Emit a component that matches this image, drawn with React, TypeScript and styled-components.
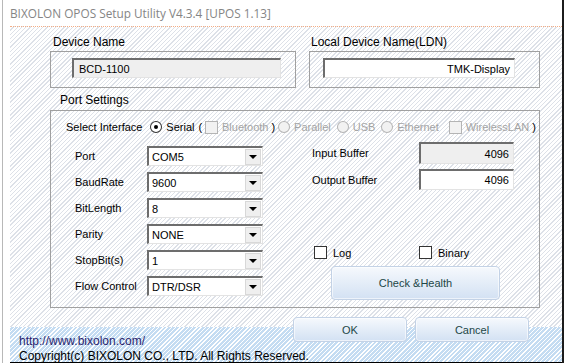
import React from "react";
import { styled, createGlobalStyle } from "styled-components";

const GlobalStyle = createGlobalStyle`
  html, body {
    margin: 0;
    padding: 0;
    background: #ffffff;
    overflow: hidden;
  }
`;

const grayHatch = "repeating-linear-gradient(135deg, #ffffff 0 2px, #dde1e8 2px 3px)";
const blueHatch = "repeating-linear-gradient(135deg, #ffffff 0 1px, #c4dcf2 1px 3px)";

const Frame = styled.div`
  box-sizing: border-box;
  width: 562px;
  height: 363px;
  margin-left: 2px;
  border-left: 1px solid #b8b8b8;
  border-right: 2px solid #1c1c1c;
  background: #ffffff;
  display: flex;
  flex-direction: column;
  font-family: "Liberation Sans", Arial, sans-serif;
  color: #000;
`;

const TitleBar = styled.div`
  height: 26px;
  padding-left: 7px;
  display: flex;
  align-items: center;
  font-family: "Open Sans", "Noto Sans", sans-serif;
  font-size: 11.8px;
  color: #858585;
  white-space: nowrap;
`;

const Content = styled.div`
  flex: 1;
  margin-left: 7px;
  border-top: 1px dotted #f4ad85;
  border-bottom: 1px solid #000;
  background: ${grayHatch};
  display: flex;
  flex-direction: column;
  padding-top: 8px;
  min-height: 0;
`;

const Main = styled.div`
  padding-left: 40px;
  display: flex;
  flex-direction: column;
`;

const TopRow = styled.div`
  display: flex;
  gap: 13px;
`;

const Group = styled.div<{ $w: number }>`
  width: ${(p) => p.$w}px;
  display: flex;
  flex-direction: column;
`;

const GroupLabel = styled.div<{ $indent?: number }>`
  height: 14px;
  line-height: 14px;
  padding-left: ${(p) => p.$indent ?? 3}px;
  font-size: 12px;
  margin-bottom: 2px;
`;

const NameBox = styled.div<{ $left: number }>`
  box-sizing: border-box;
  height: 37px;
  border: 1px solid #a0a0a0;
  padding: 6px 0 0 ${(p) => p.$left}px;
`;

const Field = styled.div<{ $w: number; $h?: number; $gray?: boolean; $right?: boolean }>`
  box-sizing: border-box;
  width: ${(p) => p.$w}px;
  height: ${(p) => p.$h ?? 20}px;
  background: ${(p) => (p.$gray ? "#efefef" : "#ffffff")};
  border-top: 2px solid #6d6d6d;
  border-left: 2px solid #6d6d6d;
  border-right: 1px solid #e3e3e3;
  border-bottom: 1px solid #e3e3e3;
  font-size: 11px;
  display: flex;
  align-items: center;
  justify-content: ${(p) => (p.$right ? "flex-end" : "flex-start")};
  padding: 0 4px 0 5px;
  white-space: nowrap;
`;

const PortLabel = styled(GroupLabel)`
  margin-top: 5px;
  margin-bottom: 3px;
`;

const PortBox = styled.div`
  box-sizing: border-box;
  width: 490px;
  height: 198px;
  border: 1px solid #a0a0a0;
  padding: 9px 0 0 15px;
  display: flex;
  flex-direction: column;
`;

const InterfaceRow = styled.div`
  height: 14px;
  display: flex;
  align-items: center;
  font-size: 11px;
  white-space: nowrap;
`;

const InterfaceTitle = styled.span`
  margin-right: 8px;
`;

const Opt = styled.span<{ $off?: boolean; $gap?: number }>`
  color: ${(p) => (p.$off ? "#a3a3a3" : "#000")};
  margin-left: 4px;
  margin-right: ${(p) => p.$gap ?? 4}px;
`;

const Paren = styled.span`
  color: #000;
  margin-right: 3px;
`;

const Radio = styled.span<{ $off?: boolean; $on?: boolean }>`
  box-sizing: border-box;
  width: 12px;
  height: 12px;
  border-radius: 50%;
  border: 1px solid ${(p) => (p.$off ? "#b4b4b4" : "#333")};
  background: ${(p) => (p.$off ? "#f2f2f2" : "#fff")};
  display: inline-flex;
  align-items: center;
  justify-content: center;
  &::after {
    content: "";
    display: ${(p) => (p.$on ? "block" : "none")};
    width: 4px;
    height: 4px;
    border-radius: 50%;
    background: #000;
  }
`;

const Check = styled.span<{ $off?: boolean }>`
  box-sizing: border-box;
  width: 13px;
  height: 13px;
  border: 1px solid ${(p) => (p.$off ? "#b4b4b4" : "#333")};
  background: ${(p) => (p.$off ? "#f2f2f2" : "#fff")};
  display: inline-block;
`;

const Body = styled.div`
  display: flex;
  margin-top: 8px;
  padding-left: 9px;
`;

const LeftCol = styled.div`
  width: 188px;
  padding-top: 4px;
  display: flex;
  flex-direction: column;
  gap: 6px;
`;

const RightCol = styled.div`
  margin-left: 49px;
  display: flex;
  flex-direction: column;
`;

const FormRow = styled.div<{ $gap?: number }>`
  display: flex;
  align-items: center;
  margin-top: ${(p) => p.$gap ?? 0}px;
`;

const RowLabel = styled.span<{ $w: number }>`
  width: ${(p) => p.$w}px;
  font-size: 11px;
  white-space: nowrap;
`;

const Select = styled.div`
  box-sizing: border-box;
  width: 116px;
  height: 20px;
  background: #fff;
  border-top: 2px solid #6d6d6d;
  border-left: 2px solid #6d6d6d;
  border-right: 1px solid #e3e3e3;
  border-bottom: 1px solid #e3e3e3;
  display: flex;
  align-items: center;
  justify-content: space-between;
  font-size: 11px;
  padding-left: 3px;
`;

const ArrowBtn = styled.span`
  box-sizing: border-box;
  width: 16px;
  height: 16px;
  margin-right: 1px;
  background: #efefef;
  border: 1px solid #d8d8d8;
  display: flex;
  align-items: center;
  justify-content: center;
  &::after {
    content: "";
    border-left: 4px solid transparent;
    border-right: 4px solid transparent;
    border-top: 4px solid #000;
  }
`;

const CheckRow = styled.div`
  display: flex;
  align-items: center;
  margin-top: 56px;
  padding-left: 2px;
  font-size: 11px;
`;

const CheckItem = styled.label<{ $w?: number }>`
  display: flex;
  align-items: center;
  gap: 6px;
  width: ${(p) => (p.$w ? `${p.$w}px` : "auto")};
`;

const Button = styled.div<{ $w: number; $h: number }>`
  box-sizing: border-box;
  flex-shrink: 0;
  width: ${(p) => p.$w}px;
  height: ${(p) => p.$h}px;
  border: 1px solid #c3d2e6;
  border-radius: 4px;
  background: linear-gradient(#f6f9fd, #e4edf8 50%, #d3e1f3);
  box-shadow: inset 0 0 0 1px rgba(255, 255, 255, 0.6);
  display: flex;
  align-items: center;
  justify-content: center;
  font-size: 11px;
  color: #1d4747;
`;

const HealthButton = styled(Button)`
  margin-top: 7px;
  margin-left: 19px;
`;

const Footer = styled.div`
  flex: 1;
  display: flex;
  overflow: hidden;
  background: ${blueHatch} 0 19px / 100% 100% no-repeat;
`;

const Info = styled.div`
  flex: 1;
  min-width: 0;
  padding: 26px 0 0 9px;
  font-size: 12px;
  line-height: 15px;
  white-space: nowrap;
`;

const Url = styled.div`
  color: #2b1f6e;
`;

const ButtonRow = styled.div`
  flex-shrink: 0;
  display: flex;
  gap: 8px;
  margin: 9px 33px 0 0;
  position: relative;
`;

const leftRows = [
  ["Port", "COM5"],
  ["BaudRate", "9600"],
  ["BitLength", "8"],
  ["Parity", "NONE"],
  ["StopBit(s)", "1"],
  ["Flow Control", "DTR/DSR"],
];

export default function App() {
  return (
    <>
      <GlobalStyle />
      <Frame>
        <TitleBar>BIXOLON OPOS Setup Utility V4.3.4 [UPOS 1.13]</TitleBar>
        <Content>
          <Main>
            <TopRow>
              <Group $w={246}>
                <GroupLabel>Device Name</GroupLabel>
                <NameBox $left={21}>
                  <Field $w={209} $gray>BCD-1100</Field>
                </NameBox>
              </Group>
              <Group $w={231}>
                <GroupLabel $indent={2}>Local Device Name(LDN)</GroupLabel>
                <NameBox $left={13}>
                  <Field $w={192} $right>TMK-Display</Field>
                </NameBox>
              </Group>
            </TopRow>

            <PortLabel $indent={10}>Port Settings</PortLabel>
            <PortBox>
              <InterfaceRow>
                <InterfaceTitle>Select Interface</InterfaceTitle>
                <Radio $on />
                <Opt>Serial</Opt>
                <Paren>(</Paren>
                <Check $off />
                <Opt $off $gap={0}>Bluetooth</Opt>
                <Paren>&nbsp;)</Paren>
                <Radio $off />
                <Opt $off $gap={6}>Parallel</Opt>
                <Radio $off />
                <Opt $off $gap={6}>USB</Opt>
                <Radio $off />
                <Opt $off $gap={10}>Ethernet</Opt>
                <Check $off />
                <Opt $off $gap={0}>WirelessLAN</Opt>
                <Paren>&nbsp;)</Paren>
              </InterfaceRow>

              <Body>
                <LeftCol>
                  {leftRows.map(([label, value]) => (
                    <FormRow key={label}>
                      <RowLabel $w={72}>{label}</RowLabel>
                      <Select>
                        {value}
                        <ArrowBtn />
                      </Select>
                    </FormRow>
                  ))}
                </LeftCol>

                <RightCol>
                  <FormRow>
                    <RowLabel $w={107}>Input Buffer</RowLabel>
                    <Field $w={95} $h={22} $gray $right>4096</Field>
                  </FormRow>
                  <FormRow $gap={5}>
                    <RowLabel $w={107}>Output Buffer</RowLabel>
                    <Field $w={95} $h={21} $right>4096</Field>
                  </FormRow>
                  <CheckRow>
                    <CheckItem $w={105}>
                      <Check />
                      Log
                    </CheckItem>
                    <CheckItem>
                      <Check />
                      Binary
                    </CheckItem>
                  </CheckRow>
                  <HealthButton $w={169} $h={34}>Check &amp;Health</HealthButton>
                </RightCol>
              </Body>
            </PortBox>
          </Main>

          <Footer>
            <Info>
              <Url>http://www.bixolon.com/</Url>
              <div>Copyright(c) BIXOLON CO., LTD. All Rights Reserved.</div>
            </Info>
            <ButtonRow>
              <Button $w={114} $h={25}>OK</Button>
              <Button $w={114} $h={25}>Cancel</Button>
            </ButtonRow>
          </Footer>
        </Content>
      </Frame>
    </>
  );
}
